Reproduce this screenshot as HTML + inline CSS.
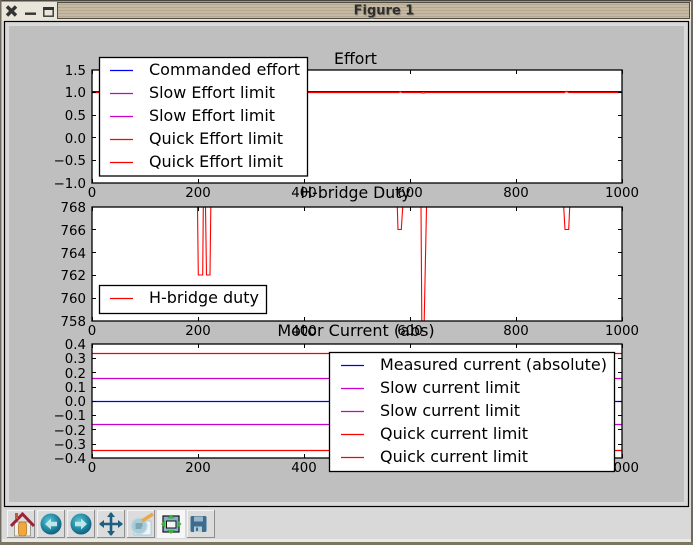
<!DOCTYPE html>
<html><head><meta charset="utf-8">
<style>
html,body{margin:0;padding:0;background:#d9d9d9;width:693px;height:545px;overflow:hidden}
svg{display:block}
text{font-family:"DejaVu Sans",sans-serif;fill:#000}
.t{font-size:13.33px}
.l{font-size:16px}
.e{text-anchor:end}
.m{text-anchor:middle}
</style></head><body>
<svg width="693" height="545" viewBox="0 0 693 545" xmlns="http://www.w3.org/2000/svg">
<defs>
<pattern id="st" width="4" height="3" patternUnits="userSpaceOnUse"><rect width="4" height="3" fill="#c6b9a4"/><rect y="1" width="4" height="1" fill="#b5a88f"/></pattern>
<radialGradient id="ball" cx=".4" cy=".35" r=".7"><stop offset="0" stop-color="#5cc0cc"/><stop offset=".6" stop-color="#1f87a3"/><stop offset="1" stop-color="#0f5a78"/></radialGradient>
<g id="xt"><path d="M92.500 0v4M198.500 0v4M304.500 0v4M410.500 0v4M516.500 0v4M622.500 0v4" stroke="#000" stroke-width="1" fill="none"/></g>
<g id="xb"><path d="M92.500 0v-4M198.500 0v-4M304.500 0v-4M410.500 0v-4M516.500 0v-4M622.500 0v-4" stroke="#000" stroke-width="1" fill="none"/></g>
</defs>

<!-- window chrome -->
<rect width="693" height="545" fill="#e9e5da"/>
<rect x="0" y="0" width="693" height="1.5" fill="#4a4740"/>
<rect x="0" y="0" width="1.5" height="545" fill="#6e6a60"/>
<rect x="691" y="0" width="2" height="545" fill="#6e6a60"/>
<rect x="0" y="542" width="693" height="3" fill="#7a7564"/>
<rect x="2" y="20" width="689" height="522" fill="#d9d9d9"/>
<rect x="2" y="539" width="689" height="3" fill="#eceadf"/>
<rect x="2" y="2" width="689" height="19" fill="#e9e5da"/>

<!-- window buttons -->
<path d="M7 6.500l9 9M16 6.500l-9 9" stroke="#333" stroke-width="3.400"/>
<rect x="25" y="12.500" width="11" height="2.400" fill="#333"/>
<rect x="43.800" y="7.800" width="9.400" height="8.400" fill="#e9e5da" stroke="#333" stroke-width="1.400"/>
<rect x="43" y="7" width="11" height="3" fill="#333"/>

<!-- titlebar -->
<rect x="57.500" y="2.500" width="632" height="16" fill="url(#st)" stroke="#4f4c44" stroke-width="1"/>
<text x="385" y="15.500" class="m" style="font-size:13px;font-weight:bold;fill:#9a917f">Figure 1</text>
<text x="384" y="14.500" class="m" style="font-size:13px;font-weight:bold;fill:#2e2e2e">Figure 1</text>

<!-- canvas frame -->
<rect x="4.500" y="21.500" width="684" height="485" fill="#d9d9d9" stroke="#000" stroke-width="1.200"/>
<rect x="9" y="26" width="675" height="476" fill="#bfbfbf"/>

<!-- AXES 1 -->
<rect x="92" y="70" width="530" height="113" fill="#fff"/>
<path d="M92 91.500H622" stroke="#0000ff" stroke-width="1"/>
<path d="M92 92.500H397L399 92.500L400 91.500L402 92.500H421L423 93L426 92.500H564L566.500 91.500L569 92.500H622" stroke="#ff0000" stroke-width="1.300" fill="none"/>
<use href="#xt" y="70"/><use href="#xb" y="183"/>
<path d="M92 92.500h4M92 115.500h4M92 137.500h4M92 160.500h4M622 92.500h-4M622 115.500h-4M622 137.500h-4M622 160.500h-4" stroke="#000"/>
<rect x="92" y="70" width="530" height="113" fill="none" stroke="#000" stroke-width="1.300"/>
<text class="t e" x="86" y="75">1.5</text><text class="t e" x="86" y="97">1.0</text><text class="t e" x="86" y="120">0.5</text><text class="t e" x="86" y="143">0.0</text><text class="t e" x="86" y="165">−0.5</text><text class="t e" x="86" y="188">−1.0</text>
<text class="t m" x="92" y="197">0</text><text class="t m" x="198" y="197">200</text><text class="t m" x="304" y="197">400</text><text class="t m" x="410" y="197">600</text><text class="t m" x="516" y="197">800</text><text class="t m" x="622" y="197">1000</text>
<text class="l m" x="355.500" y="64" style="font-size:15.700px">Effort</text>

<!-- AXES 2 -->
<rect x="92" y="207" width="530" height="114" fill="#fff"/>
<path d="M197.500 207L198.300 275H202.700L203.300 207M205.500 207L206.500 275H210L210.800 207M397.300 207L398 229.500H401.300L402.700 207M421 207L421.800 321M424.200 321L426.500 207M563.700 207L565 229.500H568.700L569.700 207" stroke="#ff0000" stroke-width="1.100" fill="none"/>
<use href="#xt" y="207"/><use href="#xb" y="321"/>
<path d="M92 229.500h4M92 252.500h4M92 275.500h4M92 298.500h4M622 229.500h-4M622 252.500h-4M622 275.500h-4M622 298.500h-4" stroke="#000"/>
<rect x="92" y="207" width="530" height="114" fill="none" stroke="#000" stroke-width="1.300"/>
<text class="t e" x="86" y="212">768</text><text class="t e" x="86" y="235">766</text><text class="t e" x="86" y="258">764</text><text class="t e" x="86" y="280">762</text><text class="t e" x="86" y="303">760</text><text class="t e" x="86" y="326">758</text>
<text class="t m" x="92" y="335">0</text><text class="t m" x="198" y="335">200</text><text class="t m" x="304" y="335">400</text><text class="t m" x="410" y="335">600</text><text class="t m" x="516" y="335">800</text><text class="t m" x="622" y="335">1000</text>
<text class="l m" x="355.500" y="198" style="font-size:15.700px">H-bridge Duty</text>

<!-- AXES 3 -->
<rect x="92" y="344" width="530" height="114" fill="#fff"/>
<path d="M92 353.500H622M92 450.500H622" stroke="#ff0000" stroke-width="1.200"/>
<path d="M92 378.500H622M92 424.500H622" stroke="#cc00cc" stroke-width="1.200"/>
<path d="M92 401.500H622" stroke="#0000ff" stroke-width="1.200"/>
<use href="#xt" y="344"/><use href="#xb" y="458"/>
<path d="M92 358.500h4M92 372.500h4M92 387.500h4M92 401.500h4M92 415.500h4M92 429.500h4M92 444.500h4M622 358.500h-4M622 372.500h-4M622 387.500h-4M622 401.500h-4M622 415.500h-4M622 429.500h-4M622 444.500h-4" stroke="#000"/>
<rect x="92" y="344" width="530" height="114" fill="none" stroke="#000" stroke-width="1.300"/>
<text class="t e" x="86" y="349">0.4</text><text class="t e" x="86" y="363">0.3</text><text class="t e" x="86" y="378">0.2</text><text class="t e" x="86" y="392">0.1</text><text class="t e" x="86" y="406">0.0</text><text class="t e" x="86" y="420">−0.1</text><text class="t e" x="86" y="435">−0.2</text><text class="t e" x="86" y="449">−0.3</text><text class="t e" x="86" y="463">−0.4</text>
<text class="t m" x="92" y="472">0</text><text class="t m" x="198" y="472">200</text><text class="t m" x="304" y="472">400</text><text class="t m" x="410" y="472">600</text><text class="t m" x="516" y="472">800</text><text class="t m" x="622" y="472">1000</text>
<text class="l m" x="356" y="336" style="font-size:16px">Motor Current (abs)</text>

<!-- LEGEND 1 -->
<rect x="99.500" y="57.500" width="208" height="118.500" fill="#fff" stroke="#000" stroke-width="1.300"/>
<g stroke-width="1.200">
<path d="M110 70.500h23" stroke="#0000ff"/><path d="M110 93.500h23M110 116.500h23" stroke="#cc00cc"/><path d="M110 139.500h23M110 162.500h23" stroke="#ff0000"/>
</g>
<text class="l" x="149" y="75" textLength="151" lengthAdjust="spacingAndGlyphs">Commanded effort</text>
<text class="l" x="149" y="98" textLength="126" lengthAdjust="spacingAndGlyphs">Slow Effort limit</text>
<text class="l" x="149" y="121" textLength="126" lengthAdjust="spacingAndGlyphs">Slow Effort limit</text>
<text class="l" x="149" y="144" textLength="134" lengthAdjust="spacingAndGlyphs">Quick Effort limit</text>
<text class="l" x="149" y="167" textLength="134" lengthAdjust="spacingAndGlyphs">Quick Effort limit</text>

<!-- LEGEND 2 -->
<rect x="99.500" y="285.500" width="167" height="28" fill="#fff" stroke="#000" stroke-width="1.300"/>
<path d="M110 298.500h23" stroke="#ff0000" stroke-width="1.200"/>
<text class="l" x="149" y="303" textLength="110" lengthAdjust="spacingAndGlyphs">H-bridge duty</text>

<!-- LEGEND 3 -->
<rect x="329.500" y="352.500" width="285" height="119" fill="#fff" stroke="#000" stroke-width="1.300"/>
<g stroke-width="1.200">
<path d="M341 365.500h23" stroke="#0000ff"/><path d="M341 388.500h23M341 411.500h23" stroke="#cc00cc"/><path d="M341 434.500h23M341 457.500h23" stroke="#ff0000"/>
</g>
<text class="l" x="380" y="370" textLength="227" lengthAdjust="spacingAndGlyphs">Measured current (absolute)</text>
<text class="l" x="380" y="393" textLength="140" lengthAdjust="spacingAndGlyphs">Slow current limit</text>
<text class="l" x="380" y="416" textLength="140" lengthAdjust="spacingAndGlyphs">Slow current limit</text>
<text class="l" x="380" y="439" textLength="148" lengthAdjust="spacingAndGlyphs">Quick current limit</text>
<text class="l" x="380" y="462" textLength="148" lengthAdjust="spacingAndGlyphs">Quick current limit</text>

<!-- TOOLBAR buttons -->
<g id="b0"><rect x="7" y="510" width="28" height="28" fill="#8e8e8e"/><rect x="7" y="510" width="27" height="27" fill="#f4f4f4"/><rect x="8" y="511" width="26" height="26" fill="#dcdcdc"/></g>
<use href="#b0" x="30"/><use href="#b0" x="60"/><use href="#b0" x="90"/><use href="#b0" x="120"/>
<use href="#b0" x="180"/>
<rect x="157" y="510" width="28" height="28" fill="#f6f6f6"/>

<!-- home -->
<rect x="14.500" y="522" width="16" height="14" fill="#f1efe6" stroke="#8a8a80" stroke-width=".8"/>
<rect x="18.500" y="522" width="8" height="14" rx="3" fill="#f0a83a" stroke="#b4762a" stroke-width=".8"/>
<path d="M11 526L22.500 514L34 526" fill="none" stroke="#9e2236" stroke-width="3"/>
<rect x="15" y="513" width="3" height="6" fill="#c05a3c"/>

<!-- back -->
<circle cx="51" cy="524" r="10.500" fill="url(#ball)"/>
<path d="M45 524l6-5.500v3.200h6v4.600h-6v3.200z" fill="#bfe7ea"/>
<!-- forward -->
<circle cx="81" cy="524" r="10.500" fill="url(#ball)"/>
<path d="M87 524l-6-5.500v3.200h-6v4.600h6v3.200z" fill="#bfe7ea"/>

<!-- move -->
<path d="M100 524h22M111 513v22" stroke="#1d5f80" stroke-width="2.600"/>
<path d="M111 512l-4 5h8zM111 536l-4-5h8zM99 524l5-4v8zM123 524l-5-4v8z" fill="#1d5f80"/>

<!-- zoom / edit -->
<rect x="134" y="521" width="17" height="14" fill="#eef6fa" stroke="#9cc5d8" stroke-width=".8"/>
<circle cx="139" cy="526" r="8" fill="#a9cdd8" stroke="#c3dce4" stroke-width="1.500"/>
<path d="M135.500 524h7M135.500 526h7M135.500 528h6" stroke="#52808f" stroke-width=".9"/>
<path d="M142 521l11-7" stroke="#e8a850" stroke-width="3.600"/>

<!-- subplots -->
<rect x="163" y="516" width="16" height="16" fill="#8ab0d0" stroke="#111" stroke-width="1.200"/>
<rect x="166.500" y="521" width="9.500" height="7" fill="#f4f4f4" stroke="#111"/>
<path d="M171 514.500l-4 4h8zM171 534l-4-4h8zM161 524l4-4v8zM181.500 524l-4-4v8z" fill="#3cb043"/>

<!-- save -->
<rect x="190.500" y="516" width="16" height="16" rx="1.500" fill="#3a6d90"/>
<rect x="194" y="516.500" width="9" height="5" fill="#9fb6c4"/>
<rect x="194" y="526.500" width="8" height="5.500" fill="#b8ccd6"/>
<rect x="196" y="527.500" width="2" height="3.500" fill="#3a6d90"/>
</svg>
</body></html>
